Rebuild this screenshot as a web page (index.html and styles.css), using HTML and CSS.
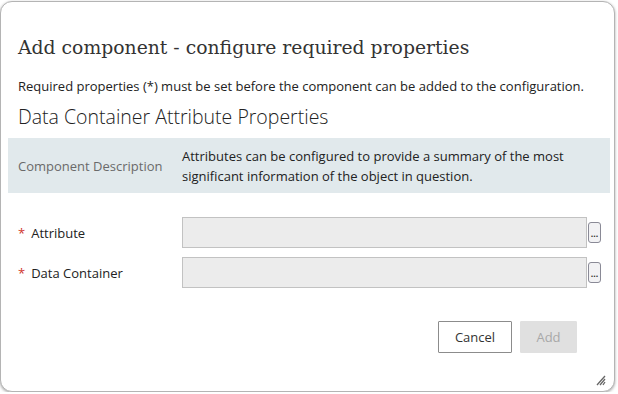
FILE: index.html
```html
<!DOCTYPE html>
<html>
<head>
<meta charset="utf-8">
<link rel="stylesheet" href="styles.css">
</head>
<body>
<div class="dialog">
  <h1 class="title">Add component - configure required properties</h1>
  <p class="intro">Required properties (*) must be set before the component can be added to the configuration.</p>
  <h2 class="section">Data Container Attribute Properties</h2>
  <div class="band">
    <div class="band-label">Component Description</div>
    <div class="band-text">Attributes can be configured to provide a summary of the most significant information of the object in question.</div>
  </div>
  <div class="fields">
    <div class="field">
      <label class="field-label"><span class="req">*</span>Attribute</label>
      <div class="field-input"></div>
      <button class="pick">...</button>
    </div>
    <div class="field">
      <label class="field-label"><span class="req">*</span>Data Container</label>
      <div class="field-input"></div>
      <button class="pick">...</button>
    </div>
  </div>
  <div class="actions">
    <button class="btn btn-cancel">Cancel</button>
    <button class="btn btn-add" disabled>Add</button>
  </div>
  <div class="grip">
    <svg width="12" height="12" viewBox="0 0 12 12"><path d="M11 2 L3 11 M11 5 L6 11 M11 8 L9 11" stroke="#666" stroke-width="1.3" fill="none"/></svg>
  </div>
</div>
</body>
</html>
```
FILE: styles.css
```css
html, body {
  margin: 0;
  padding: 0;
  background: #fff;
}
body {
  padding: 1px 0 0 0;
  font-family: "Open Sans", "Noto Sans", sans-serif;
  color: #222;
}
.dialog {
  box-sizing: border-box;
  width: 615px;
  height: 391px;
  border: 1px solid #b4b4b4;
  border-radius: 12px;
  background: #fff;
  box-shadow: 0 1px 3px rgba(0,0,0,0.35);
  padding: 0 4px 0 7px;
  display: flex;
  flex-direction: column;
}
.title {
  margin: 34px 0 0 10px;
  font-family: "DejaVu Serif", serif;
  font-weight: normal;
  font-size: 18.8px;
  line-height: 24px;
  color: #333;
}
.intro {
  margin: 17px 0 0 10px;
  font-size: 13px;
  line-height: 18px;
  color: #222;
}
.section {
  margin: 10px 0 0 10px;
  font-weight: 300;
  font-size: 19.5px;
  line-height: 24px;
  color: #222;
}
.band {
  margin-top: 9px;
  height: 55px;
  background: #e1e9ec;
  display: flex;
  align-items: center;
}
.band-label {
  width: 164px;
  padding-left: 10px;
  font-size: 13px;
  color: #6a6a6a;
}
.band-text {
  font-size: 13px;
  line-height: 20px;
  color: #222;
  width: 420px;
}
.fields {
  margin-top: 24px;
  display: flex;
  flex-direction: column;
  gap: 9px;
}
.field {
  display: flex;
  align-items: center;
  height: 31px;
}
.field-label {
  width: 164px;
  padding-left: 10px;
  font-size: 13px;
  color: #222;
}
.req {
  color: #d0342c;
  margin-right: 6px;
}
.field-input {
  box-sizing: border-box;
  width: 405px;
  height: 31px;
  background: #ececec;
  border: 1px solid #c2c2c2;
}
.pick {
  box-sizing: border-box;
  width: 13px;
  height: 21px;
  margin-left: 1px;
  padding: 0 0 3px 0;
  border: 1px solid #8a8a96;
  border-radius: 3px;
  background: #f2f2f4;
  font-family: "Liberation Sans", sans-serif;
  font-size: 9px;
  font-weight: bold;
  line-height: 1;
  color: #333;
  display: flex;
  align-items: flex-end;
  justify-content: center;
  letter-spacing: 0;
}
.actions {
  margin-top: 33px;
  display: flex;
  justify-content: flex-end;
  gap: 8px;
  padding-right: 33px;
}
.btn {
  box-sizing: border-box;
  height: 32px;
  font-family: "Open Sans", "Noto Sans", sans-serif;
  font-size: 13px;
  border-radius: 1px;
}
.btn-cancel {
  width: 74px;
  background: #fff;
  border: 1px solid #8c8c8c;
  color: #333;
}
.btn-add {
  width: 57px;
  background: #e0e0e0;
  border: 1px solid #e0e0e0;
  color: #a8a8a8;
}
.grip {
  margin-top: auto;
  align-self: flex-end;
  margin-bottom: 5px;
  margin-right: 4px;
  height: 12px;
  line-height: 0;
}
```
